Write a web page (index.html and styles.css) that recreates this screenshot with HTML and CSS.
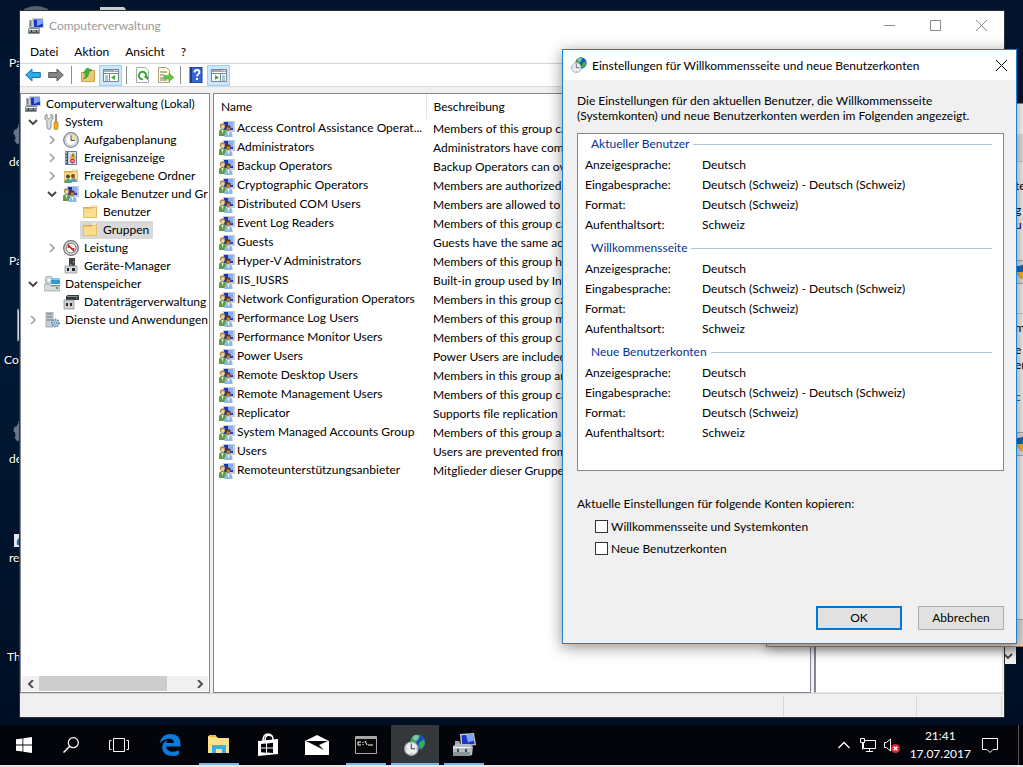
FILE: index.html
```html
<!DOCTYPE html>
<html lang="de">
<head>
<meta charset="utf-8">
<title>Computerverwaltung</title>
<link rel="stylesheet" href="styles.css">
</head>
<body>
<svg class="defs" aria-hidden="true">
  <symbol id="mmc" viewBox="0 0 16 16">
    <path d="M4 0h11l1 10-9 1-3-2z" fill="#c9cdd2"/><path d="M5.500 1.500h9l.5 7.500-8 .5-1-1z" fill="#1a35c4"/><path d="M9 1.500h5.500l.3 4L9 8z" fill="#7fa6f2"/>
    <path d="M1 2h3v8H1z" fill="#aab1b8"/><path d="M2 3h1v5H2z" fill="#6d757d"/><path d="M0 11l2-2h9l1 2v4l-1 1H0z" fill="#87919a"/><path d="M1 11h10v1H1z" fill="#e4e8ea"/><path d="M1 14h10v1H1z" fill="#4d5860"/><path d="M3 12h1v2H3zM8 12h1v2H8z" fill="#333"/>
  </symbol>
  <symbol id="users" viewBox="0 0 16 16">
    <path d="M4 0h12v11H4z" fill="#c8ccd0"/><path d="M5 1h9v8H5z" fill="#1733cf"/><path d="M9 1h5v6l-5 1z" fill="#8aaef5"/>
    <circle cx="3.500" cy="5" r="2.700" fill="#b08d4d"/><circle cx="3.800" cy="5.800" r="1.700" fill="#f1d3a4"/><path d="M0 15v-4q0-3 3.500-3T7 11v4z" fill="#5d9c43"/><path d="M2.500 9l1 4 1-4z" fill="#e9f5dc"/>
    <circle cx="9" cy="7" r="2.800" fill="#5c3a22"/><circle cx="9.300" cy="8" r="1.800" fill="#b98253"/><path d="M5.500 16v-2q0-3.500 4-3.500t4 3.500v2z" fill="#8db9e3"/><path d="M8.500 11l1 4 1-4z" fill="#f2f8ff"/>
  </symbol>
  <symbol id="tools" viewBox="0 0 16 16">
    <path d="M3 0v4l2 1 2-1V0l2 2v3L7 7v7q-2 3-4 0V7L1 5V2z" fill="#d8dcdf" stroke="#777e85" stroke-width=".8"/><path d="M11 0h2v8h-2z" fill="#8c9399"/><path d="M10 8h4v6l-1 2h-2l-1-2z" fill="#f3ab16" stroke="#b87706" stroke-width=".6"/>
  </symbol>
  <symbol id="clock" viewBox="0 0 16 16"><circle cx="8" cy="8" r="7.300" fill="#e9eef5" stroke="#85898e" stroke-width="1.300"/><circle cx="8" cy="8" r="5.500" fill="#fff" stroke="#b7c1ce"/><path d="M8 8V3a5 5 0 0 1 5 5z" fill="#f6dc8c"/><path d="M8 3.500V8.500h4" fill="none" stroke="#3d4d63"/></symbol>
  <symbol id="event" viewBox="0 0 16 16"><path d="M2.500 1.500h11v13h-11z" fill="#b9cbe6" stroke="#64799c"/><path d="M3 2h2v12H3z" fill="#46536a"/><path d="M1 3h3M1 6h3M1 9h3M1 12h3" stroke="#ddd"/><path d="M6 2h7v12H6z" fill="#d8e3f2"/><path d="M10 3l3 5H7z" fill="#f4c51e" stroke="#a98112" stroke-width=".5"/><path d="M9.500 4.500h1v2h-1z" fill="#222"/><circle cx="9.500" cy="11" r="2.400" fill="#d6262e"/><path d="M8.500 10l2 2m0-2l-2 2" stroke="#fff" stroke-width=".7"/></symbol>
  <symbol id="folder" viewBox="0 0 16 16"><path d="M1 3h8l1-2h4l1 2v11H1z" fill="#dcb04e"/><path d="M10 1h4v3h-4z" fill="#f5ebc9"/><path d="M1.500 4.500h8l1-1h4v10h-13z" fill="#fbdd8b" stroke="#e3bf6c"/></symbol>
  <symbol id="shared" viewBox="0 0 16 16"><use href="#folder"/><circle cx="5" cy="8.500" r="2" fill="#3f4c39"/><circle cx="10" cy="8" r="2" fill="#7b4b25"/><path d="M1 15q1-4 4-4t4 4z" fill="#52a07c"/><path d="M7 14q1-4 3.500-4t3.500 4z" fill="#5c99c9"/></symbol>
  <symbol id="perf" viewBox="0 0 16 16"><circle cx="8" cy="8" r="7.300" fill="#eee" stroke="#707070" stroke-width="1.300"/><circle cx="8" cy="8" r="5" fill="#fff" stroke="#666"/><path d="M5.500 8V5.500l5 5V8" fill="none" stroke="#d32027" stroke-width="1.600"/></symbol>
  <symbol id="device" viewBox="0 0 16 16"><path d="M6 0h6v8H6z" fill="#3f4347"/><path d="M10 3h1v2h-1z" fill="#42d255"/><path d="M2 8h12v7H2z" fill="#d3d7da" stroke="#888" stroke-width=".7"/><path d="M4 10h2v3H4zM9 10h3v3H9z" fill="#202326"/><path d="M7 6h2v2H7z" fill="#777"/></symbol>
  <symbol id="storage" viewBox="0 0 16 16"><path d="M1 6l4-4h10l1 4z" fill="#cfd4d7"/><circle cx="5" cy="4" r="4" fill="#c9dbe4" stroke="#839099" stroke-width=".6"/><circle cx="5" cy="4" r="1.200" fill="#fff"/><path d="M7 2h9v6H7z" fill="#2f9bd6"/><path d="M7 2h9v2H7z" fill="#84cbef"/><path d="M0 9h16v2H0z" fill="#7a8288"/><path d="M0 8h5l2 2h9v5H0z" fill="#d7dbdd" stroke="#878e94" stroke-width=".6"/><path d="M12 11h2v2h-2z" fill="#31b84b"/></symbol>
  <symbol id="disk" viewBox="0 0 16 16"><path d="M3 2l2-1h11v5H3z" fill="#34383b"/><path d="M4 2h11v1H4z" fill="#8c9297"/><path d="M13 4h1v1h-1z" fill="#4bd264"/><path d="M1 6h10v9H1z" fill="#ccd0d3" stroke="#888" stroke-width=".7"/><path d="M3 9h2v3H3zM7 9h2v3H7z" fill="#25282a"/></symbol>
  <symbol id="services" viewBox="0 0 16 16"><path d="M2 0h7v15H2z" fill="#c5ced6" stroke="#8d98a2" stroke-width=".7"/><path d="M3 2h5M3 5h5M3 8h5" stroke="#657480"/><circle cx="11.500" cy="11" r="3.400" fill="#c8ddf0" stroke="#6989a8" stroke-width="2" stroke-dasharray="1.500 1"/><circle cx="11.500" cy="11" r="1.200" fill="#fff" stroke="#6989a8"/></symbol>
  <symbol id="pane" viewBox="0 0 16 16"><path d="M.5 2.500h15v12H.5z" fill="#fff" stroke="#7d858f"/><path d="M1 3h14v2H1z" fill="#a3abb5"/><path d="M11 3h1v1h-1zM13 3h1v1h-1z" fill="#fff"/><path d="M1 6.500h14" stroke="#7d858f"/></symbol>
  <symbol id="world" viewBox="0 0 24 24"><circle cx="15" cy="9" r="8.500" fill="#1c50bd"/><path d="M9 3q5-4 9-1l-3 3-2 5-4 1-2-3zM17 9l5-3 1 5-4 6-3-3z" fill="#39b049"/><circle cx="13" cy="4" r="3" fill="#a9d8f2" opacity=".6"/><circle cx="8" cy="16" r="7.300" fill="#e9edf0" stroke="#a1a9b0" stroke-width="1.200"/><path d="M8 11v5h4" fill="none" stroke="#58626b" stroke-width="1.300"/><path d="M8 10v1M8 21v1M2 16h1M13 16h1" stroke="#777"/></symbol>
  <symbol id="toolbox" viewBox="0 0 24 24"><path d="M8 1l14-1 2 12-15 2z" fill="#c9cdd2"/><path d="M9.500 2.300l11.500-.8 1.600 9.500-12.300 1.300z" fill="#1a35c4"/><path d="M14 2l7-.5 1 6-6 2z" fill="#7fa6f2"/><path d="M3 8h4l3 6H3z" fill="#a2a9af"/><path d="M1 13l3-2h14l3 3-1 8-3 1H1z" fill="#b5bdc3"/><path d="M1 14h17v1H1z" fill="#f4f6f7"/><path d="M1 19h17v4H1z" fill="#8a949c"/><path d="M5 16h2v3H5zM13 16h2v3h-2z" fill="#444c53"/></symbol>
  <symbol id="open" viewBox="0 0 16 16"><path d="M4 6l4 4 4-4" fill="none" stroke="#404040" stroke-width="1.800"/></symbol>
  <symbol id="closed" viewBox="0 0 16 16"><path d="M6 4l4 4-4 4" fill="none" stroke="#a0a0a0" stroke-width="1.600"/></symbol>
  <symbol id="gear" viewBox="0 0 28 28"><circle cx="14" cy="14" r="9" fill="none" stroke="#68758a" stroke-width="6"/><circle cx="14" cy="14" r="12" fill="none" stroke="#68758a" stroke-width="3" stroke-dasharray="5 4.400"/></symbol>
  <symbol id="shield" viewBox="0 0 16 16"><path d="M8 0q4 2 7 2v5q0 6-7 9-7-3-7-9V2q3 0 7-2z" fill="#1769c2"/><path d="M1 8h14q-1 5-7 8-6-3-7-8z" fill="#f5b92c"/></symbol>
</svg>

<main class="desktop">
  <svg class="shortcut s-bin" viewBox="0 0 28 20"><path d="M2 3q12-6 24 0v17H2z" fill="#59616e"/></svg>
  <svg class="shortcut s-doc" viewBox="0 0 28 20"><path d="M0 0h24l3 4v16H0z" fill="#c9ccd0"/></svg>
  <svg class="shortcut s-gear1"><use href="#gear"/></svg>
  <svg class="shortcut s-gear2"><use href="#gear"/></svg>
  <svg class="shortcut s-file" viewBox="0 0 28 32"><path d="M0 0h28v32H0z" fill="#8f959c"/><path d="M1 2h27v28H1z" fill="#d4d7da"/></svg>
  <svg class="shortcut s-link" viewBox="0 0 13 13"><path d="M0 0h13v13H0z" fill="#e8e8e8"/><path d="M3 11q-1-7 4-8v8z" fill="#2d62a5"/></svg>
  <span class="caption c1">Pa</span><span class="caption c2">de</span><span class="caption c3">Pa</span><span class="caption c4">Co</span><span class="caption c5">de</span><span class="caption c6">re</span><span class="caption c7">Th</span>

  <div class="window rear"><svg class="icon"><use href="#open"/></svg></div>

  <section class="window console">
    <header class="titlebar">
      <svg class="icon"><use href="#mmc"/></svg>
      <h1 class="title">Computerverwaltung</h1>
      <button class="caption-btn" aria-label="Minimieren"><svg viewBox="0 0 11 11"><path d="M0 5.500h11"/></svg></button>
      <button class="caption-btn" aria-label="Maximieren"><svg viewBox="0 0 11 11"><path d="M.5.500h10v10H.5z"/></svg></button>
      <button class="caption-btn" aria-label="Schließen"><svg viewBox="0 0 11 11"><path d="M0 0l11 11M11 0L0 11"/></svg></button>
    </header>
    <nav class="menubar"><button>Datei</button><button>Aktion</button><button>Ansicht</button><button>?</button></nav>
    <div class="toolbar">
      <button aria-label="Zurück"><svg viewBox="0 0 16 16"><path d="M.7 8l6.300-6v3.500h8.300v5H7V14z" fill="#2ea7ea" stroke="#1673b4"/></svg></button>
      <button aria-label="Vorwärts"><svg viewBox="0 0 16 16"><path d="M15.300 8L9 2v3.500H.7v5H9V14z" fill="#858585" stroke="#5a5a5a"/></svg></button>
      <span class="sep"></span>
      <button aria-label="Nach oben"><svg viewBox="0 0 16 16"><path d="M1.500 5.500h6l1-2h6v11h-13z" fill="#ecc978" stroke="#c59f4c"/><path d="M3 12q3-1 2-6H3l4-5 5 2-3 2q0 6-6 7z" fill="#43b136" stroke="#2a8424" stroke-width=".5"/></svg></button>
      <button class="on" aria-label="Konsolenstruktur"><svg viewBox="0 0 16 16"><use href="#pane"/><path d="M6.500 7v7" stroke="#7d858f"/><path d="M2 9h3M2 11h3M2 13h3" stroke="#518bc0"/><path d="M12 8v5l-4-2.500z" fill="#3bad31"/></svg></button>
      <span class="sep"></span>
      <button aria-label="Aktualisieren"><svg viewBox="0 0 16 16"><path d="M1.500.5h9l3 3v12h-12z" fill="#fff" stroke="#aaa"/><path d="M8 12.200A3.700 3.700 0 1 1 11.200 8.500v2" fill="none" stroke="#35a637" stroke-width="2"/><path d="M8 9.500h5V13z" fill="#35a637"/></svg></button>
      <button aria-label="Liste exportieren"><svg viewBox="0 0 16 16"><path d="M.5.500h8l3 3v12H.5z" fill="#fff8dd" stroke="#ada27c"/><path d="M2 5h7M2 8h4M2 11h4M2 13h7" stroke="#777"/><path d="M6 8.500h5V6l5 4.500-5 4v-2.500H6z" fill="#69c44a" stroke="#3f9927" stroke-width=".5"/></svg></button>
      <span class="sep tight"></span>
      <button aria-label="Hilfe"><svg viewBox="0 0 16 16"><path d="M2 0h12v16H2z" fill="#3867d4" stroke="#163889"/><path d="M2 0h2v16H2z" fill="#203c91"/><path d="M6.500 5.500q0-2.500 2.500-2.500t2.500 2.200c0 2-2.500 2-2.500 4.300" fill="none" stroke="#fff" stroke-width="1.800"/><path d="M8 11h2v2H8z" fill="#fff"/></svg></button>
      <button class="on" aria-label="Aktionsbereich"><svg viewBox="0 0 16 16"><use href="#pane"/><path d="M9.500 7v7" stroke="#7d858f"/><path d="M11 9h3M11 11h3M11 13h3" stroke="#518bc0"/><path d="M4 8v5l4-2.500z" fill="#3bad31"/></svg></button>
    </div>
    <div class="panes">
      <div class="pane tree">
        <ul class="nodes">
          <li class="root"><svg class="icon"><use href="#mmc"/></svg>Computerverwaltung (Lokal)</li>
          <li><svg class="icon chev"><use href="#open"/></svg><svg class="icon"><use href="#tools"/></svg>System</li>
          <li class="l2"><svg class="icon chev"><use href="#closed"/></svg><svg class="icon"><use href="#clock"/></svg>Aufgabenplanung</li>
          <li class="l2"><svg class="icon chev"><use href="#closed"/></svg><svg class="icon"><use href="#event"/></svg>Ereignisanzeige</li>
          <li class="l2"><svg class="icon chev"><use href="#closed"/></svg><svg class="icon"><use href="#shared"/></svg>Freigegebene Ordner</li>
          <li class="l2"><svg class="icon chev"><use href="#open"/></svg><svg class="icon"><use href="#users"/></svg>Lokale Benutzer und Gruppen</li>
          <li class="l3"><span class="leaf"><svg class="icon"><use href="#folder"/></svg>Benutzer</span></li>
          <li class="l3"><span class="leaf selected"><svg class="icon"><use href="#folder"/></svg>Gruppen</span></li>
          <li class="l2"><svg class="icon chev"><use href="#closed"/></svg><svg class="icon"><use href="#perf"/></svg>Leistung</li>
          <li class="l2"><span class="icon chev"></span><svg class="icon"><use href="#device"/></svg>Geräte-Manager</li>
          <li><svg class="icon chev"><use href="#open"/></svg><svg class="icon"><use href="#storage"/></svg>Datenspeicher</li>
          <li class="l2"><span class="icon chev"></span><svg class="icon"><use href="#disk"/></svg>Datenträgerverwaltung</li>
          <li><svg class="icon chev"><use href="#closed"/></svg><svg class="icon"><use href="#services"/></svg>Dienste und Anwendungen</li>
        </ul>
        <div class="hscroll">
          <button aria-label="Nach links"><svg viewBox="0 0 8 8"><path d="M6 0L2 4l4 4"/></svg></button>
          <div class="track"><div class="thumb"></div></div>
          <button aria-label="Nach rechts"><svg viewBox="0 0 8 8"><path d="M2 0l4 4-4 4"/></svg></button>
        </div>
      </div>
      <div class="pane list">
        <table>
          <colgroup><col class="col-name"><col></colgroup>
          <thead><tr><th>Name</th><th>Beschreibung</th></tr></thead>
          <tbody>
            <tr><td><svg class="icon"><use href="#users"/></svg>Access Control Assistance Operat...</td><td>Members of this group can</td></tr>
            <tr><td><svg class="icon"><use href="#users"/></svg>Administrators</td><td>Administrators have complete</td></tr>
            <tr><td><svg class="icon"><use href="#users"/></svg>Backup Operators</td><td>Backup Operators can over</td></tr>
            <tr><td><svg class="icon"><use href="#users"/></svg>Cryptographic Operators</td><td>Members are authorized</td></tr>
            <tr><td><svg class="icon"><use href="#users"/></svg>Distributed COM Users</td><td>Members are allowed to</td></tr>
            <tr><td><svg class="icon"><use href="#users"/></svg>Event Log Readers</td><td>Members of this group can</td></tr>
            <tr><td><svg class="icon"><use href="#users"/></svg>Guests</td><td>Guests have the same access</td></tr>
            <tr><td><svg class="icon"><use href="#users"/></svg>Hyper-V Administrators</td><td>Members of this group have</td></tr>
            <tr><td><svg class="icon"><use href="#users"/></svg>IIS_IUSRS</td><td>Built-in group used by Internet</td></tr>
            <tr><td><svg class="icon"><use href="#users"/></svg>Network Configuration Operators</td><td>Members in this group can</td></tr>
            <tr><td><svg class="icon"><use href="#users"/></svg>Performance Log Users</td><td>Members of this group may</td></tr>
            <tr><td><svg class="icon"><use href="#users"/></svg>Performance Monitor Users</td><td>Members of this group can</td></tr>
            <tr><td><svg class="icon"><use href="#users"/></svg>Power Users</td><td>Power Users are included</td></tr>
            <tr><td><svg class="icon"><use href="#users"/></svg>Remote Desktop Users</td><td>Members in this group are</td></tr>
            <tr><td><svg class="icon"><use href="#users"/></svg>Remote Management Users</td><td>Members of this group can</td></tr>
            <tr><td><svg class="icon"><use href="#users"/></svg>Replicator</td><td>Supports file replication</td></tr>
            <tr><td><svg class="icon"><use href="#users"/></svg>System Managed Accounts Group</td><td>Members of this group are</td></tr>
            <tr><td><svg class="icon"><use href="#users"/></svg>Users</td><td>Users are prevented from</td></tr>
            <tr><td><svg class="icon"><use href="#users"/></svg>Remoteunterstützungsanbieter</td><td>Mitglieder dieser Gruppe</td></tr>
          </tbody>
        </table>
      </div>
      <div class="pane actions"></div>
    </div>
    <footer class="status"><span></span><span></span><span></span></footer>
  </section>

  <section class="window region">
    <div class="band"></div>
    <div class="strip"></div>
    <div class="block"><p class="wide">te</p><p>g</p><p>u</p><div class="cta"><svg class="icon"><use href="#shield"/></svg></div></div>
    <div class="block second"><p>m</p><p class="wide">e</p><p>er</p><p class="link">c</p><div class="cta"><svg class="icon"><use href="#shield"/></svg></div></div>
    <div class="foot"></div>
  </section>

  <section class="window dialog" role="dialog" aria-labelledby="dlg-title">
    <header class="titlebar">
      <svg class="icon"><use href="#world"/></svg>
      <h2 class="title" id="dlg-title">Einstellungen für Willkommensseite und neue Benutzerkonten</h2>
      <button class="caption-btn" aria-label="Schließen"><svg viewBox="0 0 11 11"><path d="M0 0l11 11M11 0L0 11"/></svg></button>
    </header>
    <div class="body">
      <p class="intro">Die Einstellungen für den aktuellen Benutzer, die Willkommensseite<br>(Systemkonten) und neue Benutzerkonten werden im Folgenden angezeigt.</p>
      <div class="box">
        <h3>Aktueller Benutzer</h3>
        <dl><dt>Anzeigesprache:</dt><dd>Deutsch</dd><dt>Eingabesprache:</dt><dd>Deutsch (Schweiz) - Deutsch (Schweiz)</dd><dt>Format:</dt><dd>Deutsch (Schweiz)</dd><dt>Aufenthaltsort:</dt><dd>Schweiz</dd></dl>
        <h3>Willkommensseite</h3>
        <dl><dt>Anzeigesprache:</dt><dd>Deutsch</dd><dt>Eingabesprache:</dt><dd>Deutsch (Schweiz) - Deutsch (Schweiz)</dd><dt>Format:</dt><dd>Deutsch (Schweiz)</dd><dt>Aufenthaltsort:</dt><dd>Schweiz</dd></dl>
        <h3>Neue Benutzerkonten</h3>
        <dl><dt>Anzeigesprache:</dt><dd>Deutsch</dd><dt>Eingabesprache:</dt><dd>Deutsch (Schweiz) - Deutsch (Schweiz)</dd><dt>Format:</dt><dd>Deutsch (Schweiz)</dd><dt>Aufenthaltsort:</dt><dd>Schweiz</dd></dl>
      </div>
      <p class="copy">Aktuelle Einstellungen für folgende Konten kopieren:</p>
      <div class="checks">
        <label><input type="checkbox">Willkommensseite und Systemkonten</label>
        <label><input type="checkbox">Neue Benutzerkonten</label>
      </div>
      <div class="buttons"><button class="default">OK</button><button>Abbrechen</button></div>
    </div>
  </section>
</main>

<footer class="taskbar">
  <button class="task start" aria-label="Start"><svg viewBox="0 0 16 16"><path d="M0 2.300l6.500-.9v6.200H0zM7.300 1.300L16 0v7.600H7.300zM0 8.400h6.500v6.200L0 13.700zM7.300 8.400H16V16l-8.700-1.300z" fill="#fff"/></svg></button>
  <button class="task" aria-label="Suchen"><svg viewBox="0 0 16 16"><circle cx="10.300" cy="5.700" r="5" fill="none" stroke="#fff" stroke-width="1.200"/><path d="M6.800 9.200L.5 15.500" stroke="#fff" stroke-width="1.500"/></svg></button>
  <button class="task" aria-label="Taskansicht"><svg class="w20" viewBox="0 0 20 16"><path d="M4.500 1.500h11v13h-11zM2.500 3.500h-2v9h2M17.500 3.500h2v9h-2" fill="none" stroke="#fff"/></svg></button>
  <div class="pinned">
    <button class="task" aria-label="Edge"><svg class="w22" viewBox="0 0 20 21"><path d="M0 9Q2 0 10.500 0 20 0 20 9.500V12H6.500q.5 5 6 5 3 0 6-1.500v4Q16 21 12 21 3 21 2.500 13 2.500 8 8 5.500 6.500 7 6.400 8.500h7.400q0-4-4.300-4Q4 4.500 0 9z" fill="#0a7bdc"/></svg></button>
    <button class="task open" aria-label="Explorer"><svg class="w22" viewBox="0 0 22 20"><path d="M0 1h8l2 2h11v15H0z" fill="#fce08b"/><path d="M1 0h7v2H1z" fill="#f3bd25"/><path d="M4 10h14v8h-4v-4H8v4H4z" fill="#37b0e4"/></svg></button>
    <button class="task" aria-label="Store"><svg class="w24" viewBox="0 0 22 24"><path d="M1 8l20-2v15L1 23z" fill="#fff"/><path d="M6 8Q6 1 11 1t5 6M8 8q0-8 7-5" fill="none" stroke="#fff" stroke-width="1.500"/><path d="M4 11l5-.5v4H4zM10 10.400l6-.6v4.700h-6zM4 15.500h5v4.200l-5-.5zM10 15.500h6V20l-6-.4z" fill="#05070b"/></svg></button>
    <button class="task" aria-label="Mail"><svg class="w24" viewBox="0 0 24 20"><path d="M0 6l12-6 12 6v14H0z" fill="#fff"/><path d="M1 6h22l-9 4 5 5-8-4z" fill="#05070b"/></svg></button>
    <button class="task open" aria-label="Eingabeaufforderung"><svg class="w22" viewBox="0 0 22 18"><path d="M.5.500h21v17H.5z" fill="#080808" stroke="#a7a7a7"/><path d="M1 1h20v2H1z" fill="#a7a7a7"/><path d="M6 6H3v3h3M8 6v1M8 8v1M10 5l2 4M13 9h5" stroke="#fff" fill="none"/></svg></button>
    <button class="task open active" aria-label="Region"><svg class="w22"><use href="#world"/></svg></button>
    <button class="task open" aria-label="Computerverwaltung"><svg class="w24"><use href="#toolbox"/></svg></button>
  </div>
  <div class="tray">
    <svg class="w16" viewBox="0 0 16 16"><path d="M2.500 11L8 5.500l5.500 5.500" fill="none" stroke="#fff" stroke-width="1.300"/></svg>
    <svg class="w16" viewBox="0 0 16 16"><path d="M4 3.500h11.500v8H3.500V6M.5 1.500h4v4h-4zM2.500 5.500v7M9.500 12v2M6 14.500h7" fill="none" stroke="#fff"/></svg>
    <svg class="w16" viewBox="0 0 16 16"><path d="M.5 5.500h2L6.500 2v12l-4-3.500h-2z" fill="none" stroke="#fff"/><circle cx="11.500" cy="11.500" r="4.500" fill="#e02636"/><path d="M9.700 9.700l3.600 3.600m0-3.600l-3.600 3.600" stroke="#fff" stroke-width="1.300"/></svg>
    <time class="time">21:41<br>17.07.2017</time>
    <svg class="w16" viewBox="0 0 16 16"><path d="M.5 1.500h15v11H11L8 15.500 5 12.500H.5z" fill="none" stroke="#fff"/></svg>
    <span class="peek"></span>
  </div>
</footer>
</body>
</html>
```
FILE: styles.css
```css
* { box-sizing: border-box; }
html, body { height: 100%; }
body {
  margin: 0;
  display: flex;
  flex-direction: column;
  overflow: hidden;
  font-family: Lato, "Open Sans", sans-serif;
  font-size: 12px;
  font-variant-ligatures: none;
  line-height: 15px;
  color: #000;
  background: #e8e8e8;
}
.defs { position: absolute; width: 0; height: 0; }
h1, h2, h3, p, ul, dl, dd { margin: 0; padding: 0; font: inherit; }
button { font: inherit; color: inherit; margin: 0; padding: 0; border: 0; background: none; }
.icon { width: 16px; height: 16px; flex: none; display: block; }

.desktop {
  flex: 1;
  min-height: 0;
  position: relative;
  overflow: hidden;
  background: linear-gradient(#03132e, #011a36 45%, #000e24);
}
.shortcut, .caption, .window { position: absolute; }
.caption { color: #fff; text-shadow: 1px 1px 1px #000; }
.c1 { left: 9px; top: 55px; }
.c2 { left: 9px; top: 154px; }
.c3 { left: 9px; top: 253px; }
.c4 { left: 4px; top: 352px; }
.c5 { left: 9px; top: 451px; }
.c6 { left: 9px; top: 550px; }
.c7 { left: 7px; top: 649px; }
.s-bin { left: 22px; top: 6px; width: 28px; height: 20px; }
.s-doc { left: 100px; top: 7px; width: 28px; height: 20px; }
.s-gear1, .s-gear2 { left: 13px; width: 28px; height: 28px; }
.s-gear1 { top: 121px; }
.s-gear2 { top: 418px; }
.s-file { left: 17px; top: 309px; width: 28px; height: 32px; }
.s-link { left: 14px; top: 534px; width: 13px; height: 13px; }

.window { display: flex; flex-direction: column; background: #f0f0f0; }
.rear { right: 7px; bottom: 61px; width: 60px; height: 60px; justify-content: flex-end; align-items: flex-end; }
.console { left: 20px; right: 19px; top: 11px; bottom: 8px; box-shadow: 0 0 0 1px #2a3038; }

.titlebar { display: flex; align-items: center; height: 30px; flex: none; padding-left: 8px; background: #fff; }
.console .titlebar { height: 29px; }
.title { flex: 1; margin-left: 5px; color: #999; }
.caption-btn { width: 46px; height: 28px; display: flex; align-items: center; justify-content: center; }
.caption-btn svg { width: 11px; height: 11px; fill: none; stroke: #8a8a8a; }
.menubar { display: flex; gap: 16px; height: 24px; flex: none; align-items: center; padding-left: 10px; background: #fff; border-bottom: 1px solid #d5d5d5; }
.toolbar { display: flex; align-items: center; height: 23px; padding-left: 1px; background: #fff; border-bottom: 1px solid #dadada; flex: none; }
.toolbar button { width: 23px; height: 21px; display: flex; align-items: center; justify-content: center; }
.toolbar svg { width: 16px; height: 16px; }
.toolbar .on { background: #cce8ff; border: 1px solid #99d1ff; }
.sep { width: 1px; height: 18px; margin: 0 4px; background: #8d8d8d; }
.tight { margin: 0 3px; }

.panes { flex: 1; min-height: 0; display: grid; grid-template-columns: 190px minmax(0, 1fr) 189px; gap: 3px; padding: 6px 1px 0 0; }
.pane { background: #fff; border: 1px solid #828790; overflow: hidden; min-width: 0; display: flex; flex-direction: column; }
.tree { padding: 1px; line-height: 14px; }
.nodes { flex: 1; list-style: none; overflow: hidden; white-space: nowrap; }
.nodes li { display: flex; align-items: center; height: 18px; padding-left: 3px; }
.nodes .icon { margin-right: 5px; }
.nodes .chev { margin-right: 3px; }
.nodes .l2 { padding-left: 22px; }
.nodes .l3 { padding-left: 58px; }
.leaf { display: flex; align-items: center; height: 18px; padding: 0 4px 0 2px; }
.selected { background: #d9d9d9; }
.hscroll { display: flex; height: 15px; background: #f0f0f0; }
.hscroll button { width: 17px; display: flex; align-items: center; justify-content: center; }
.hscroll svg { width: 8px; height: 8px; fill: none; stroke: #505050; stroke-width: 2; }
.track { flex: 1; }
.thumb { width: 84%; height: 100%; background: #cdcdcd; }
.list table { width: 100%; border-collapse: collapse; table-layout: fixed; white-space: nowrap; }
.col-name { width: 212px; }
.list th { height: 25px; padding: 0 0 0 7px; text-align: left; font-weight: normal; }
.list th:first-child { border-right: 1px solid #e5e5e5; }
.list td { height: 19px; padding: 0 0 0 7px; overflow: hidden; }
.list td:first-child { padding-left: 5px; }
.list td .icon { display: inline-block; vertical-align: middle; margin-right: 2px; }
.actions { border-width: 1px 1px 1px 2px; border-color: #828790 #e3e3e3 #e3e3e3 #828790; }
.status { display: grid; grid-template-columns: 1fr 133px 85px; height: 24px; padding: 2px 2px 1px 0; border-top: 1px solid #d7d7d7; }
.status span { border-right: 1px solid #d7d7d7; }

.region { left: 767px; top: 104px; bottom: 79px; width: 300px; background: #f3f3f3; box-shadow: 0 0 0 1px #8c8c8c, 0 4px 10px rgba(0, 0, 0, .35); }
.band { height: 30px; background: #fff; }
.strip { height: 28px; background: #e4e4e4; border-bottom: 1px solid #ccc; }
.block { display: flex; flex-direction: column; height: 152px; padding: 16px 0 0 248px; border-bottom: 1px solid #ccc; }
.block .wide { margin-bottom: 9px; }
.cta { height: 24px; margin: 28px 0 0; padding: 3px 0; background: #e1e1e1; border: 1px solid #adadad; }
.second { padding-top: 6px; border: 0; }
.second .wide { margin: 7px 0 0; }
.link { margin-top: 17px; color: #0b62b5; }
.foot { height: 27px; margin-top: auto; border-top: 1px solid #aaa; background: #dcdcdc; }

.dialog { left: 562px; right: 6px; top: 49px; bottom: 81px; border: 1px solid #1883d7; box-shadow: 0 3px 14px rgba(0, 0, 0, .45); }
.dialog .title { color: #000; }
.dialog .caption-btn { width: 30px; }
.dialog .caption-btn svg { stroke: #000; }
.body { flex: 1; display: flex; flex-direction: column; padding: 13px 12px 13px 14px; }
.intro { margin-bottom: 10px; white-space: nowrap; }
.box { height: 338px; flex: none; background: #fff; border: 1px solid #828790; padding: 0 11px 0 7px; line-height: 14px; }
.box h3 { display: flex; align-items: center; height: 20px; gap: 4px; padding-left: 6px; color: #003399; }
.box h3::after { content: ""; flex: 1; height: 1px; background: #b0c4e0; }
.box dl { display: grid; grid-template-columns: 117px 1fr; grid-auto-rows: 20px; align-items: center; padding: 1px 0 3px; }
.copy { margin-top: 25px; }
.checks { display: flex; flex-direction: column; padding: 4px 0 0 18px; }
.checks label { display: flex; align-items: center; height: 22px; gap: 3px; }
.checks input { appearance: none; width: 13px; height: 13px; margin: 0; border: 1px solid #333; background: #fff; }
.buttons { display: flex; justify-content: flex-end; gap: 16px; margin-top: auto; }
.buttons button { width: 86px; height: 24px; line-height: 14px; background: #e1e1e1; border: 1px solid #adadad; }
.buttons .default { border: 2px solid #0078d7; }

.taskbar { display: flex; height: 40px; flex: none; margin-bottom: 2px; background: #03050a; color: #fff; }
.task { width: 48px; display: flex; align-items: center; justify-content: center; }
.start { width: 47px; }
.pinned { display: flex; gap: 1px; margin-left: 3px; }
.task svg { width: 16px; height: 16px; }
.taskbar .w16 { width: 16px; height: 16px; }
.taskbar .w20 { width: 20px; height: 20px; }
.taskbar .w22 { width: 22px; height: 22px; }
.taskbar .w24 { width: 24px; height: 24px; }
.open { box-shadow: inset 0 -2px #76b9ed; margin: 0 4px; width: 40px; }
.active { width: 48px; margin: 0; background: #36373b; }
.tray { margin-left: auto; display: flex; align-items: center; gap: 8px; }
.time { text-align: center; line-height: 18px; margin: 0 3px 0 2px; }
.peek { width: 1px; height: 40px; margin: 0 4px 0 12px; background: #555; }
```
